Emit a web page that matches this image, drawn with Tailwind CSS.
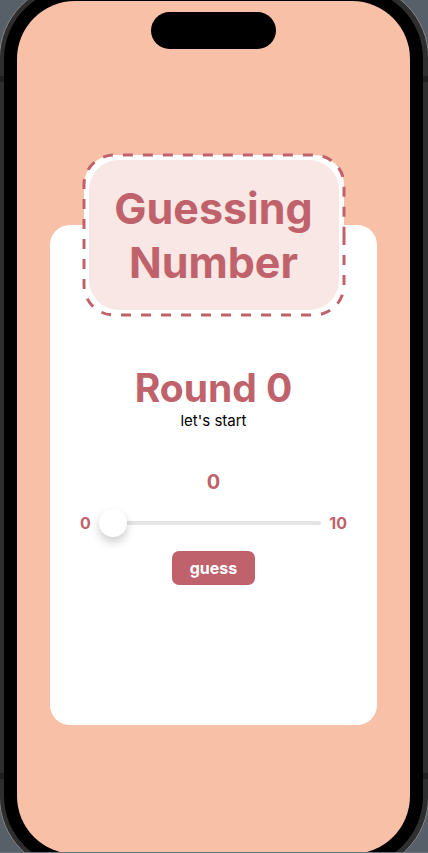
<!DOCTYPE html>
<html lang="en">
<head>
<meta charset="utf-8">
<meta name="viewport" content="width=device-width, initial-scale=1">
<title>Guessing Number</title>
<script src="https://cdn.jsdelivr.net/npm/@tailwindcss/browser@4"></script>
</head>
<body class="bg-[#575f68] font-['Inter',sans-serif] text-[#c0626b]">
<div class="flex h-screen flex-col overflow-hidden border-b border-[#6b7080]">
  <!-- Phone: metal rim, black bezel, screen -->
  <div class="relative -mx-px -mt-[17px] -mb-[20px] flex grow shrink-0 flex-col rounded-[75px] border border-[#858585] bg-[#2e2e2e] py-1 pr-[5px] pl-1">
    <div class="absolute -inset-x-px top-[92px] h-1.5 bg-[#1f1f1f]"></div>
    <div class="absolute -inset-x-px bottom-[92px] h-1.5 bg-[#1f1f1f]"></div>
    <div class="relative flex grow flex-col rounded-[71px] bg-black p-[13px]">
      <main class="relative flex grow flex-col rounded-[58px] bg-[#f8c0a7] px-[33px] pt-56">
        <div class="absolute inset-x-0 top-[11px] mx-auto h-[37px] w-[125px] rounded-full bg-black"></div>
        <section class="flex min-h-[500px] flex-col items-center rounded-[20px] bg-white px-[30px]">
          <div class="relative -mt-[72px] flex h-[164px] w-[264px] items-center justify-center">
            <svg class="absolute inset-0" width="264" height="164" viewBox="0 0 264 164" aria-hidden="true">
              <path d="M262 82V132A30 30 0 0 1 232 162H32A30 30 0 0 1 2 132V32A30 30 0 0 1 32 2H232A30 30 0 0 1 262 32V82" fill="#fff" stroke="#c0626b" stroke-width="3" stroke-dasharray="10 10"/>
              <rect x="7" y="7" width="250" height="150" rx="30" fill="#f8e7e4"/>
            </svg>
            <h1 class="relative text-center text-[43px] leading-[54px] font-bold">Guessing<br>Number</h1>
          </div>
          <h2 class="mt-[47px] text-[39px] leading-[48px] font-bold">Round 0</h2>
          <p class="text-[15px] leading-[18px] text-black">let's start</p>
          <output for="number" class="mt-10 text-xl leading-6 font-bold">0</output>
          <div class="mt-[15px] flex h-7 w-full items-center gap-2 text-base font-bold">
            <label for="number">0</label>
            <input id="number" type="range" min="0" max="10" value="0" aria-label="Your number" class="h-7 min-w-0 grow appearance-none bg-transparent [&::-webkit-slider-runnable-track]:h-1 [&::-webkit-slider-runnable-track]:rounded-full [&::-webkit-slider-runnable-track]:bg-[#e4e4e4] [&::-webkit-slider-thumb]:-mt-3 [&::-webkit-slider-thumb]:size-7 [&::-webkit-slider-thumb]:appearance-none [&::-webkit-slider-thumb]:rounded-full [&::-webkit-slider-thumb]:bg-white [&::-webkit-slider-thumb]:shadow-[0_5px_10px_rgba(0,0,0,0.2)]">
            <span>10</span>
          </div>
          <button type="button" class="mt-[14px] h-[34px] rounded-[7px] bg-[#c0626b] px-[18px] text-base font-bold text-white">guess</button>
        </section>
      </main>
    </div>
  </div>
</div>
<script>
  const slider = document.getElementById('number');
  slider.addEventListener('input', () => { document.querySelector('output').value = slider.value; });
</script>
</body>
</html>
